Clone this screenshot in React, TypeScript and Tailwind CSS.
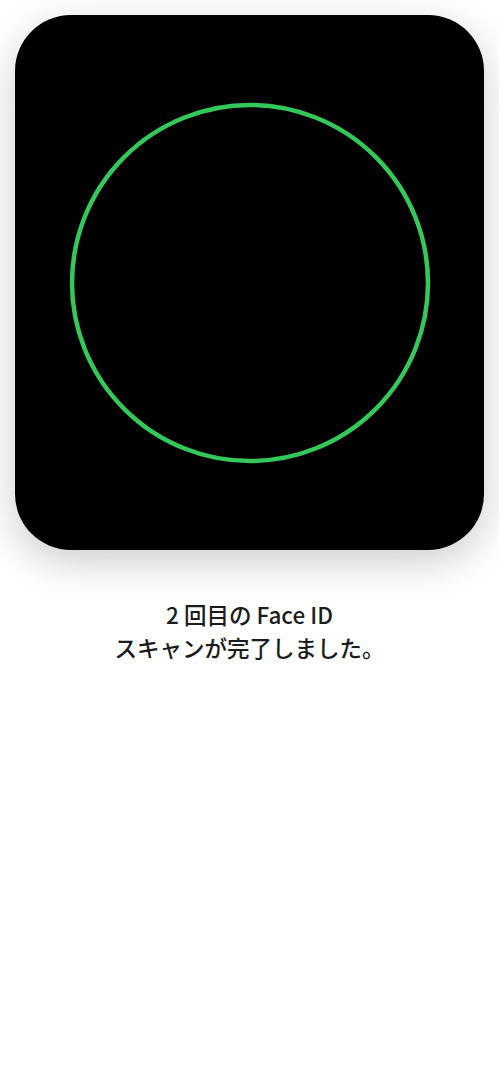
export default function App() {
  return (
    <div className="min-h-[1080px] w-full bg-white flex flex-col items-center pt-[15px]">
      <div className="w-[469px] h-[535px] rounded-[56px] bg-black shadow-[0_12px_40px_rgba(0,0,0,0.2)] flex items-center justify-center">
        <svg width="364" height="364" viewBox="0 0 364 364">
          <circle cx="182" cy="182" r="178" fill="none" stroke="#34c759" strokeWidth="4.5" />
        </svg>
      </div>
      <p
        className="mt-[48px] text-center text-[22.5px] leading-[33px] font-medium text-[#1c1c1e]"
        style={{ fontFamily: '"Noto Sans CJK JP", "Noto Sans", sans-serif' }}
      >
        2 回目の Face ID
        <br />
        スキャンが完了しました。
      </p>
    </div>
  );
}
